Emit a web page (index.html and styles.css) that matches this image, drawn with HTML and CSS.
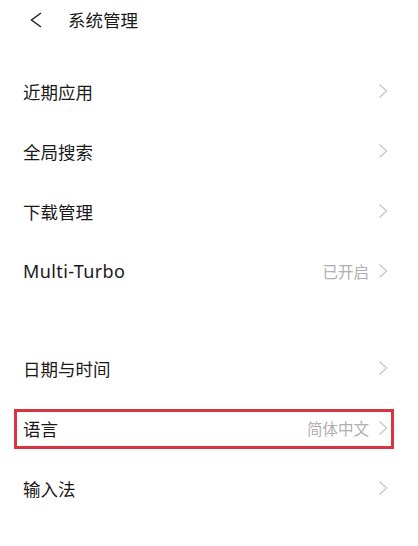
FILE: index.html
```html
<!DOCTYPE html>
<html lang="zh-CN">
<head>
    <meta charset="UTF-8">
    <meta name="viewport" content="width=device-width, initial-scale=1.0">
    <title>系统管理</title>
    <link rel="stylesheet" href="styles.css">
</head>
<body>
    <div class="header">
        <svg class="back" width="14" height="16" viewBox="0 0 14 16">
            <path d="M12 1 L2.5 8 L12 15" fill="none" stroke="#222" stroke-width="1.5"/>
        </svg>
        <span class="title">系统管理</span>
    </div>

    <div class="group">
        <div class="row"><span class="label">近期应用</span><svg class="arrow" viewBox="0 0 10 16"><path d="M1.5 1.5 L8.5 8 L1.5 14.5"/></svg></div>
        <div class="row"><span class="label">全局搜索</span><svg class="arrow" viewBox="0 0 10 16"><path d="M1.5 1.5 L8.5 8 L1.5 14.5"/></svg></div>
        <div class="row"><span class="label">下载管理</span><svg class="arrow" viewBox="0 0 10 16"><path d="M1.5 1.5 L8.5 8 L1.5 14.5"/></svg></div>
        <div class="row"><span class="label latin">Multi-Turbo</span><span class="value">已开启</span><svg class="arrow" viewBox="0 0 10 16"><path d="M1.5 1.5 L8.5 8 L1.5 14.5"/></svg></div>
    </div>

    <div class="group second">
        <div class="row"><span class="label">日期与时间</span><svg class="arrow" viewBox="0 0 10 16"><path d="M1.5 1.5 L8.5 8 L1.5 14.5"/></svg></div>
        <div class="row highlight"><span class="label">语言</span><span class="value">简体中文</span><svg class="arrow" viewBox="0 0 10 16"><path d="M1.5 1.5 L8.5 8 L1.5 14.5"/></svg></div>
        <div class="row"><span class="label">输入法</span><svg class="arrow" viewBox="0 0 10 16"><path d="M1.5 1.5 L8.5 8 L1.5 14.5"/></svg></div>
    </div>
</body>
</html>
```

FILE: styles.css
```css
body {
    margin: 0;
    background-color: #ffffff;
    font-family: "Noto Sans CJK SC", "Noto Sans", sans-serif;
    color: #1a1a1a;
}
.header {
    height: 40px;
    display: flex;
    align-items: center;
    padding-left: 29px;
    margin-top: -1px;
}
.back {
    display: block;
    margin-top: 1px;
}
.title {
    margin-left: 25px;
    font-size: 17.5px;
}
.group {
    margin-top: 22px;
}
.group.second {
    margin-top: 37px;
}
.row {
    position: relative;
    height: 60px;
    display: flex;
    align-items: center;
    padding: 0 30px 0 23px;
}
.label {
    flex: 1;
    font-size: 17.5px;
}
.label.latin {
    font-family: "Noto Sans", sans-serif;
    font-size: 18px;
    letter-spacing: 0.4px;
}
.value {
    font-size: 15.5px;
    color: #b0b0b0;
    margin-right: 9px;
}
.arrow {
    width: 10px;
    height: 16px;
    fill: none;
    stroke: #c8c8c8;
    stroke-width: 1.3;
}
/* recuadro rojo sobre la fila */
.row.highlight::after {
    content: "";
    position: absolute;
    left: 14px;
    right: 24px;
    top: 11px;
    bottom: 9px;
    border: 3px solid #d9343f;
}
```
